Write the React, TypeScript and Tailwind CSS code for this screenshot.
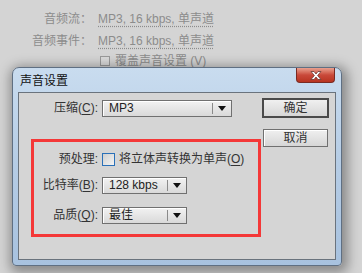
import React from "react";

const FONT = { fontFamily: '"Liberation Sans", "Noto Sans CJK SC", sans-serif' };

function Arrow() {
  return (
    <svg width="8" height="5" viewBox="0 0 8 5">
      <path d="M0 0 H8 L4 5 Z" fill="#111" />
    </svg>
  );
}

function Select({ w, value }: { w: string; value: string }) {
  return (
    <div
      className={`${w} h-[17px] flex items-stretch border border-[#707070] bg-gradient-to-b from-[#f2f2f2] to-[#d9d9d9] shadow-[inset_1px_1px_0_#ffffff]`}
    >
      <div className="flex-1 pl-[6px] leading-[15px] text-[12px] text-[#222]">{value}</div>
      <div className="w-px my-[2px] bg-[#8a8a8a]" />
      <div className="w-[18px] flex items-center justify-center">
        <Arrow />
      </div>
    </div>
  );
}

function U({ c }: { c: string }) {
  return (
    <>
      (<span className="underline underline-offset-[2px]">{c}</span>)
    </>
  );
}

export default function App() {
  return (
    <div className="relative w-[362px] h-[273px] overflow-hidden bg-[#d4d4d4]" style={FONT}>
      {/* background page */}
      <div className="pt-[8px] text-[12px] text-[#8c8c8c]">
        <div className="flex h-[22px] items-center">
          <div className="w-[92px] text-right">音频流：</div>
          <div className="ml-[6px] underline decoration-dotted decoration-[#8c8c8c] underline-offset-[3px]">
            MP3, 16 kbps, 单声道
          </div>
        </div>
        <div className="flex h-[22px] items-center">
          <div className="w-[92px] text-right">音频事件：</div>
          <div className="ml-[6px] underline decoration-dotted decoration-[#8c8c8c] underline-offset-[3px]">
            MP3, 16 kbps, 单声道
          </div>
        </div>
        <div className="flex h-[18px] items-center pl-[100px]">
          <div className="w-[10px] h-[10px] border border-[#9a9a9a] bg-[#dadada]" />
          <div className="ml-[5px]">覆盖声音设置 (V)</div>
        </div>
      </div>

      {/* dialog window */}
      <div className="absolute left-[12px] top-[67px] w-[330px] h-[199px] rounded-t-[7px] rounded-b-[4px] border border-[#5f6f82] bg-gradient-to-b from-[#c9dcef] via-[#b5cce5] to-[#a8c2df] shadow-[2px_3px_12px_4px_rgba(0,0,0,0.35)] flex flex-col">
        <div className="h-[24px] flex items-start justify-between">
          <div className="pl-[7px] pt-[5px] text-[12px] leading-[16px] text-[#111]">声音设置</div>
          <div className="mr-[6px] w-[39px] h-[15px] rounded-b-[4px] border border-t-0 border-[#7a2a22] bg-gradient-to-b from-[#e8a08f] via-[#c9493a] to-[#b8331f] flex items-center justify-center">
            <svg width="12" height="9" viewBox="0 0 12 9">
              <path
                d="M1 0.5 H4 L6 3 L8 0.5 H11 L7.6 4.5 L11 8.5 H8 L6 6 L4 8.5 H1 L4.4 4.5 Z"
                fill="#ffffff"
                stroke="#6b3b36"
                strokeWidth="0.8"
              />
            </svg>
          </div>
        </div>

        <div className="mx-[5px] h-[168px] border border-[#6a737d] bg-[#d5d5d5] flex text-[12px] text-[#333]">
          <div className="w-[243px] flex flex-col">
            <div className="mt-[7px] flex items-center">
              <div className="w-[79px] text-right leading-[17px]">
                压缩<U c="C" />:
              </div>
              <div className="ml-[4px]">
                <Select w="w-[130px]" value="MP3" />
              </div>
            </div>

            <div className="mt-[22px] ml-[12px] w-[230px] h-[98px] border-[3px] border-[#f43838] flex flex-col">
              <div className="mt-[11px] flex items-center h-[13px]">
                <div className="w-[64px] text-right leading-[13px]">预处理:</div>
                <div className="ml-[4px] w-[13px] h-[13px] border border-[#2a70b8] bg-gradient-to-br from-[#cfcfcf] to-[#f4f4f4]" />
                <div className="ml-[4px] leading-[13px]">
                  将立体声转换为单声<U c="O" />
                </div>
              </div>
              <div className="mt-[11px] flex items-center">
                <div className="w-[64px] text-right leading-[17px]">
                  比特率<U c="B" />:
                </div>
                <div className="ml-[4px]">
                  <Select w="w-[85px]" value="128 kbps" />
                </div>
              </div>
              <div className="mt-[13px] flex items-center">
                <div className="w-[64px] text-right leading-[17px]">
                  品质<U c="Q" />:
                </div>
                <div className="ml-[4px]">
                  <Select w="w-[85px]" value="最佳" />
                </div>
              </div>
            </div>
          </div>

          <div className="flex flex-col pt-[5px]">
            <div className="w-[67px] h-[20px] border-2 border-[#4a4a4a] bg-gradient-to-b from-[#f0f0f0] to-[#d6d6d6] flex items-center justify-center leading-[16px] text-[#333]">
              确定
            </div>
            <div className="mt-[11px] ml-[1px] w-[65px] h-[18px] border border-[#707070] bg-gradient-to-b from-[#f0f0f0] to-[#d6d6d6] shadow-[inset_1px_1px_0_#ffffff] flex items-center justify-center leading-[16px] text-[#333]">
              取消
            </div>
          </div>
        </div>
      </div>
    </div>
  );
}
